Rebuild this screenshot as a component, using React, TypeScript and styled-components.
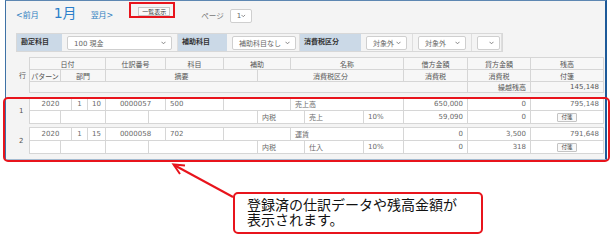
import React from "react";
import styled, { createGlobalStyle } from "styled-components";

const GlobalStyle = createGlobalStyle`
  body {
    margin: 0;
    background: #fff;
    font-family: "DejaVu Sans", "Noto Sans CJK JP", sans-serif;
  }
`;

const Page = styled.div`
  position: relative;
  width: 612px;
  height: 237px;
  overflow: hidden;
`;

const Frame = styled.div`
  margin-left: 5px;
  width: 602px;
  height: 160px;
  box-sizing: border-box;
  background: #f4f4f4;
  border-top: 1px solid #5d87b2;
  border-left: 1px solid #3f72a6;
  border-right: 2px solid #1d5a99;
  border-bottom: 1px solid #a4bbd1;
  padding-left: 10px;
`;

const Nav = styled.div`
  display: flex;
  align-items: flex-start;
  height: 32px;
`;

const NavLink = styled.span<{ $ml: number }>`
  margin: 10px 0 0 ${(p) => p.$ml}px;
  font-size: 8px;
  line-height: 10px;
  color: #2f7fc1;
`;

const Month = styled.span`
  margin: 4px 0 0 15px;
  font-size: 14px;
  line-height: 16px;
  color: #2b7fca;
`;

const ListButton = styled.span`
  margin: 6px 0 0 25px;
  height: 9px;
  padding: 0 3px;
  box-sizing: border-box;
  border: 1px solid #c8c8c8;
  background: #fafafa;
  font-size: 6px;
  line-height: 7px;
  color: #333;
  white-space: nowrap;
`;

const PageLabel = styled.span`
  margin: 11px 0 0 31px;
  font-size: 7.5px;
  line-height: 10px;
  color: #777;
`;

const Select = styled.div<{ $w: number; $ml?: number; $mt?: number }>`
  display: flex;
  align-items: center;
  justify-content: space-between;
  width: ${(p) => p.$w}px;
  height: 14px;
  margin-left: ${(p) => p.$ml ?? 0}px;
  margin-top: ${(p) => p.$mt ?? 0}px;
  box-sizing: border-box;
  padding: 0 5px 0 6px;
  border: 1px solid #cfcfcf;
  border-radius: 2px;
  background: #fff;
  font-size: 7px;
  color: #666;
  white-space: nowrap;
`;

const Chevron = () => (
  <svg width="5" height="4" viewBox="0 0 5 4">
    <path d="M0.5 0.8 L2.5 2.8 L4.5 0.8" fill="none" stroke="#777" strokeWidth="0.9" />
  </svg>
);

const Filter = styled.div`
  display: flex;
  width: 487px;
  height: 19px;
  box-sizing: border-box;
  border: 1px solid #d8d8d8;
  background: #f4f4f4;
`;

const FilterLabel = styled.div<{ $w: number }>`
  width: ${(p) => p.$w}px;
  flex: none;
  box-sizing: border-box;
  padding-left: 4px;
  background: #cbd9e7;
  font-size: 7px;
  font-weight: bold;
  line-height: 17px;
  color: #333;
`;

const FilterCell = styled.div<{ $w: number }>`
  display: flex;
  align-items: center;
  width: ${(p) => p.$w}px;
  flex: none;
  box-sizing: border-box;
  padding-left: 5px;
  border-right: 1px solid #dedede;
`;

const Block = styled.div<{ $mt: number }>`
  display: flex;
  margin-top: ${(p) => p.$mt}px;
`;

const RowNo = styled.div`
  width: 13px;
  flex: none;
  display: flex;
  align-items: center;
  padding-left: 3px;
  box-sizing: border-box;
  font-size: 7px;
  color: #555;
`;

const Grid = styled.div<{ $rows: string }>`
  display: grid;
  grid-template-columns: 30px 10px 15px 17px 42px 16px 57px 33px 32px 13px 58px 39px 63px 62px 72px;
  grid-template-rows: ${(p) => p.$rows};
  gap: 1px;
  background: #d6d6d6;
  border: 1px solid #d6d6d6;
`;

const Cell = styled.div<{ $head?: boolean; $align?: string }>`
  display: flex;
  align-items: center;
  justify-content: ${(p) =>
    p.$align === "left" ? "flex-start" : p.$align === "right" ? "flex-end" : "center"};
  padding: 0 4px;
  background: ${(p) => (p.$head ? "#f7f7f7" : "#fff")};
  font-size: 7px;
  color: ${(p) => (p.$head ? "#555" : "#6a6a6a")};
  white-space: nowrap;
  overflow: hidden;
`;

const TagButton = styled.span`
  height: 9px;
  padding: 0 3px;
  box-sizing: border-box;
  border: 1px solid #c4c4c4;
  border-radius: 1px;
  background: #f9f9f9;
  font-size: 5.5px;
  line-height: 7px;
  color: #444;
`;

const Highlight = styled.div`
  position: absolute;
  left: 3px;
  top: 97px;
  width: 607px;
  height: 65px;
  box-sizing: border-box;
  border: 2px solid #e8141c;
  border-radius: 5px;
  pointer-events: none;
`;

const ButtonMark = styled.div`
  position: absolute;
  left: 129px;
  top: 2px;
  width: 46px;
  height: 16px;
  box-sizing: border-box;
  border: 2px solid #e8141c;
  pointer-events: none;
`;

const Callout = styled.div`
  margin: 32px 0 0 233px;
  width: 250px;
  height: 42px;
  box-sizing: border-box;
  padding: 3px 0 0 12px;
  border: 2px solid #e8141c;
  border-radius: 5px;
  background: #fff;
  font-family: "Noto Sans CJK JP", sans-serif;
  font-size: 14px;
  color: #111;
`;

const CalloutLine = styled.div`
  height: 15px;
  line-height: 15px;
`;

const ArrowLayer = styled.svg`
  position: absolute;
  left: 0;
  top: 0;
  pointer-events: none;
`;

type C = { span: number; text?: React.ReactNode; align?: string };

const headRows: C[][] = [
  [
    { span: 4, text: "日付" },
    { span: 2, text: "仕訳番号" },
    { span: 1, text: "科目" },
    { span: 2, text: "補助" },
    { span: 3, text: "名称" },
    { span: 1, text: "借方金額" },
    { span: 1, text: "貸方金額" },
    { span: 1, text: "残高" },
  ],
  [
    { span: 1, text: "パターン" },
    { span: 3, text: "部門" },
    { span: 4, text: "摘要" },
    { span: 4, text: "消費税区分" },
    { span: 1, text: "消費税" },
    { span: 1, text: "消費税" },
    { span: 1, text: "付箋" },
  ],
  [
    { span: 13 },
    { span: 1, text: "繰越残高", align: "right" },
    { span: 1, text: "145,148", align: "right" },
  ],
];

const entries = [
  {
    no: 1,
    day: "10",
    slip: "0000057",
    acct: "500",
    name: "売上高",
    debit: "650,000",
    credit: "0",
    balance: "795,148",
    taxAcct: "売上",
    taxDebit: "59,090",
    taxCredit: "0",
  },
  {
    no: 2,
    day: "15",
    slip: "0000058",
    acct: "702",
    name: "運賃",
    debit: "0",
    credit: "3,500",
    balance: "791,648",
    taxAcct: "仕入",
    taxDebit: "0",
    taxCredit: "318",
  },
];

const renderRow = (cells: C[], head: boolean) =>
  cells.map((c, i) => (
    <Cell key={i} $head={head} $align={c.align} style={{ gridColumn: `span ${c.span}` }}>
      {c.text}
    </Cell>
  ));

export default function App() {
  return (
    <Page>
      <GlobalStyle />
      <Frame>
        <Nav>
          <NavLink $ml={0}>&lt;前月</NavLink>
          <Month>1月</Month>
          <NavLink $ml={14}>翌月&gt;</NavLink>
          <ListButton>一覧表示</ListButton>
          <PageLabel>ページ</PageLabel>
          <Select $w={22} $ml={6} $mt={8}>
            1 <Chevron />
          </Select>
        </Nav>
        <Filter>
          <FilterLabel $w={45}>勘定科目</FilterLabel>
          <FilterCell $w={116}>
            <Select $w={105}>
              100 現金 <Chevron />
            </Select>
          </FilterCell>
          <FilterLabel $w={49}>補助科目</FilterLabel>
          <FilterCell $w={73}>
            <Select $w={64}>
              補助科目なし <Chevron />
            </Select>
          </FilterCell>
          <FilterLabel $w={61}>消費税区分</FilterLabel>
          <FilterCell $w={52}>
            <Select $w={41}>
              対象外 <Chevron />
            </Select>
          </FilterCell>
          <FilterCell $w={59}>
            <Select $w={48}>
              対象外 <Chevron />
            </Select>
          </FilterCell>
          <FilterCell $w={30}>
            <Select $w={23}>
              <span />
              <Chevron />
            </Select>
          </FilterCell>
        </Filter>
        <Block $mt={5}>
          <RowNo>行</RowNo>
          <Grid $rows="11px 11px 10px">
            {headRows.map((r, i) => (
              <React.Fragment key={i}>{renderRow(r, true)}</React.Fragment>
            ))}
          </Grid>
        </Block>
        {entries.map((e, i) => (
          <Block key={e.no} $mt={i === 0 ? 4 : 3}>
            <RowNo>{e.no}</RowNo>
            <Grid $rows="12px 12px">
              {renderRow(
                [
                  { span: 2, text: "2020" },
                  { span: 1, text: "1" },
                  { span: 1, text: e.day },
                  { span: 2, text: e.slip },
                  { span: 1, text: e.acct, align: "left" },
                  { span: 2 },
                  { span: 3, text: e.name, align: "left" },
                  { span: 1, text: e.debit, align: "right" },
                  { span: 1, text: e.credit, align: "right" },
                  { span: 1, text: e.balance, align: "right" },
                ],
                false
              )}
              {renderRow(
                [
                  { span: 1 },
                  { span: 3 },
                  { span: 1 },
                  { span: 3 },
                  { span: 2, text: "内税", align: "left" },
                  { span: 1, text: e.taxAcct, align: "left" },
                  { span: 1, text: "10%", align: "left" },
                  { span: 1, text: e.taxDebit, align: "right" },
                  { span: 1, text: e.taxCredit, align: "right" },
                  { span: 1, text: <TagButton>付箋</TagButton> },
                ],
                false
              )}
            </Grid>
          </Block>
        ))}
      </Frame>
      <Callout>
        <CalloutLine>登録済の仕訳データや残高金額が</CalloutLine>
        <CalloutLine>表示されます。</CalloutLine>
      </Callout>
      <Highlight />
      <ButtonMark />
      <ArrowLayer width="612" height="237" viewBox="0 0 612 237">
        <path d="M233 197 L174 165" stroke="#e8141c" strokeWidth="2" fill="none" />
        <path d="M185 165.5 L173.5 164.5 L180 174" stroke="#e8141c" strokeWidth="2" fill="none" />
      </ArrowLayer>
    </Page>
  );
}
